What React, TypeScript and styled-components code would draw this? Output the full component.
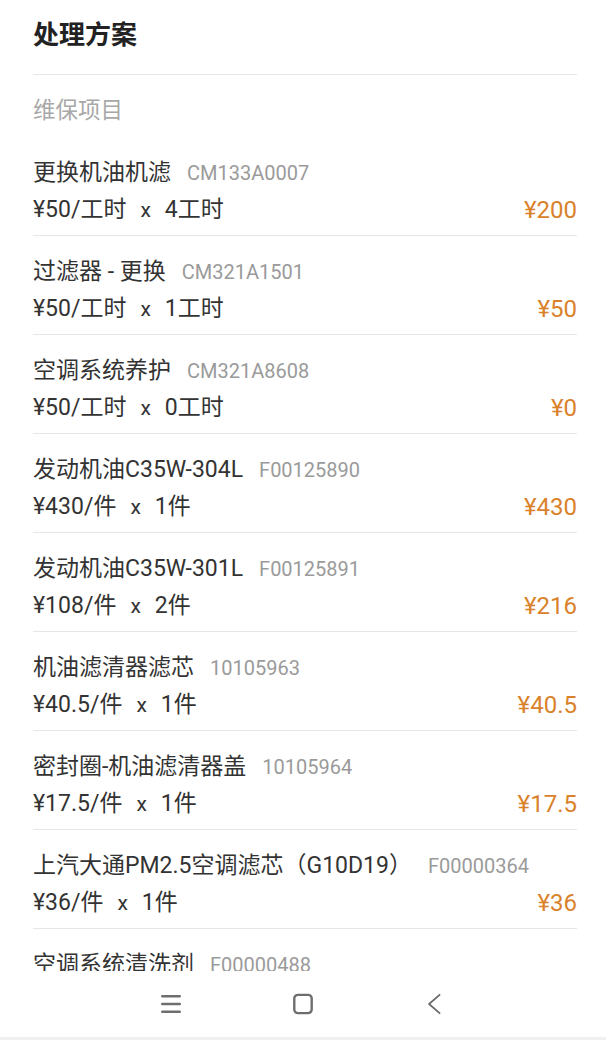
import React from 'react';
import styled, { createGlobalStyle } from 'styled-components';

type Item = {
	name: string;
	code: string;
	price: string;
	unit: string;
	qty: string;
	total: string;
};

const items: Item[] = [
	{ name: '更换机油机滤', code: 'CM133A0007', price: '¥50', unit: '工时', qty: '4', total: '¥200' },
	{ name: '过滤器 - 更换', code: 'CM321A1501', price: '¥50', unit: '工时', qty: '1', total: '¥50' },
	{ name: '空调系统养护', code: 'CM321A8608', price: '¥50', unit: '工时', qty: '0', total: '¥0' },
	{ name: '发动机油C35W-304L', code: 'F00125890', price: '¥430', unit: '件', qty: '1', total: '¥430' },
	{ name: '发动机油C35W-301L', code: 'F00125891', price: '¥108', unit: '件', qty: '2', total: '¥216' },
	{ name: '机油滤清器滤芯', code: '10105963', price: '¥40.5', unit: '件', qty: '1', total: '¥40.5' },
	{ name: '密封圈-机油滤清器盖', code: '10105964', price: '¥17.5', unit: '件', qty: '1', total: '¥17.5' },
	{ name: '上汽大通PM2.5空调滤芯（G10D19）', code: 'F00000364', price: '¥36', unit: '件', qty: '1', total: '¥36' },
	{ name: '空调系统清洗剂', code: 'F00000488', price: '¥45', unit: '件', qty: '1', total: '¥45' },
];

const GlobalStyle = createGlobalStyle`
	html, body {
		margin: 0;
		padding: 0;
		background: #fff;
	}
	body {
		font-family: Roboto, "Noto Sans CJK SC", sans-serif;
		color: #333;
	}
`;

const App: React.FC = () => {
	return (
		<Page>
			<GlobalStyle />
			<Content>
				<Title>处理方案</Title>
				<SectionLabel>维保项目</SectionLabel>
				{items.map((item) => (
					<Row key={item.code}>
						<NameLine>
							<Name>{item.name}</Name>
							<Code>{item.code}</Code>
						</NameLine>
						<PriceLine>
							<Calc>
								{item.price}/{item.unit}
								<Times>x</Times>
								{item.qty}
								{item.unit}
							</Calc>
							<Total>{item.total}</Total>
						</PriceLine>
					</Row>
				))}
			</Content>
			<NavBar>
				<NavIcon viewBox="0 0 24 24" $weight={2.8}>
					<path d="M2.5 3.5h19M2.5 12h19M2.5 20.5h19" />
				</NavIcon>
				<NavIcon viewBox="0 0 24 24" $weight={2.6}>
					<rect x="2.5" y="2" width="19" height="20" rx="4" />
				</NavIcon>
				<NavIcon viewBox="0 0 24 24" $weight={2}>
					<path d="M17 2 5.5 12 17 22" />
				</NavIcon>
			</NavBar>
		</Page>
	);
};

const Page = styled.div`
	height: 100vh;
	display: flex;
	flex-direction: column;
	overflow: hidden;
`;

const Content = styled.div`
	flex: 1;
	overflow: hidden;
	padding: 0 29px 0 33px;
`;

const Title = styled.h1`
	margin: 0;
	padding: 19px 0 23px;
	font-size: 26px;
	line-height: 32px;
	font-weight: 700;
	color: #222;
	border-bottom: 1px solid #e6e6e6;
`;

const SectionLabel = styled.div`
	padding: 19px 0 11px;
	font-size: 22.5px;
	line-height: 32px;
	color: #a8a8a8;
`;

const Row = styled.div`
	padding: 20px 0 9px;
	border-bottom: 1px solid #e6e6e6;
`;

const NameLine = styled.div`
	display: flex;
	align-items: baseline;
	gap: 16px;
	height: 32px;
	line-height: 32px;
	white-space: nowrap;
`;

const Name = styled.span`
	font-size: 23px;
	color: #333;
`;

const Code = styled.span`
	font-size: 20px;
	color: #9a9a9a;
`;

const PriceLine = styled.div`
	display: flex;
	align-items: center;
	justify-content: space-between;
	margin-top: 5px;
	height: 32px;
	line-height: 32px;
`;

const Calc = styled.span`
	font-size: 23px;
	color: #333;
`;

const Times = styled.span`
	margin: 0 14px;
	font-size: 21px;
`;

const Total = styled.span`
	font-size: 24px;
	color: #d9822b;
`;

const NavBar = styled.nav`
	height: 69px;
	flex-shrink: 0;
	display: flex;
	align-items: center;
	justify-content: center;
	gap: 110px;
	background: #fff;
	border-bottom: 3px solid #f0f0f0;
	box-sizing: border-box;
`;

const NavIcon = styled.svg<{ $weight: number }>`
	width: 22px;
	height: 22px;
	fill: none;
	stroke: #6e6e6e;
	stroke-width: ${(p) => p.$weight};
	stroke-linecap: round;
	stroke-linejoin: round;
`;

export default App;
